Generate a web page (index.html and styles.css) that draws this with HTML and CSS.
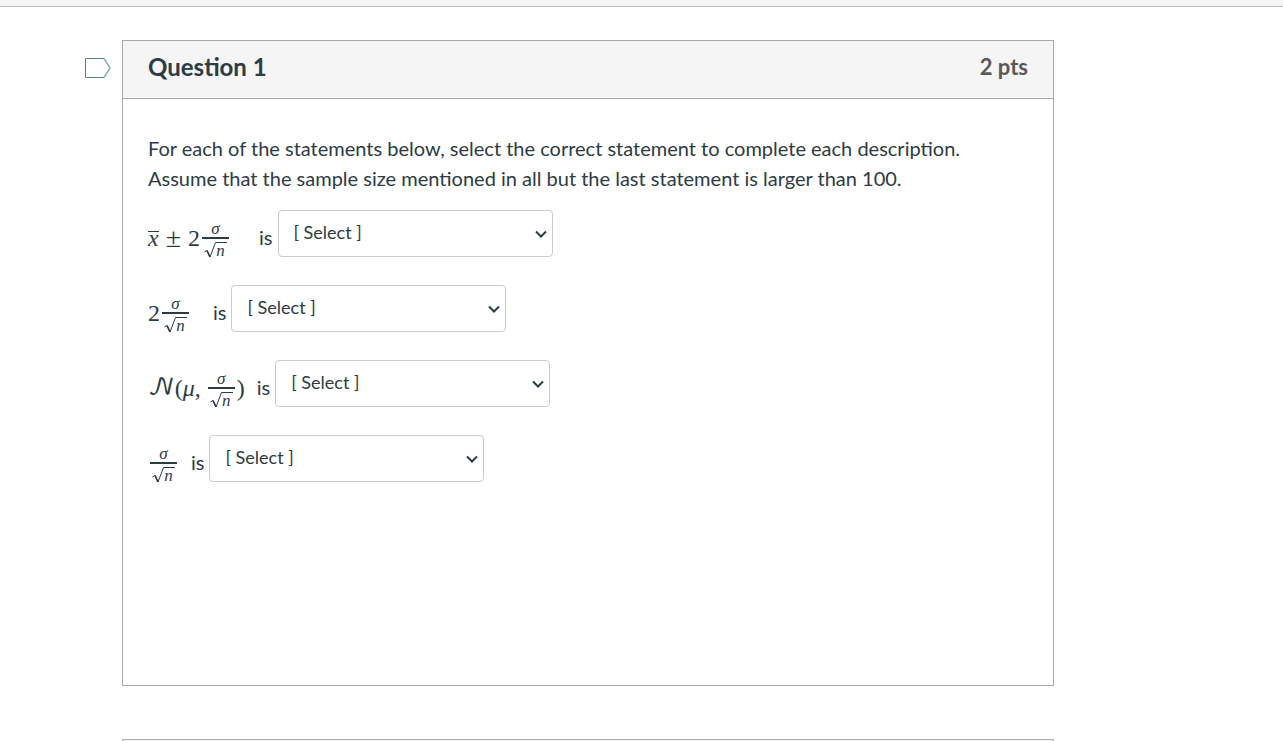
FILE: index.html
```
<!doctype html>
<html lang="en">
<head>
    <meta charset="UTF-8">
    <meta name="viewport" content="width=device-width, initial-scale=1.0">
    <title>Quiz</title>
    <link rel="stylesheet" href="styles.css">
</head>
<body>
    <div class="topbar"></div>
    <main class="questions">
        <section class="question">
            <button class="flag" type="button" aria-label="Flag question">
                <svg width="26" height="20" viewBox="0 0 26 20">
                    <path d="M19 .5L25 10L19 19.5" fill="none" stroke="#8eabbf" stroke-width="1.5"/>
                    <path d="M19 .5H.5V19.5H19" fill="none" stroke="#4f7f9d"/>
                </svg>
            </button>
            <div class="card">
                <header class="card-header">
                    <h2 class="name">Question 1</h2>
                    <span class="points">2 pts</span>
                </header>
                <div class="card-body">
                    <p class="text">For each of the statements below, select the correct statement to complete each description. Assume that the sample size mentioned in all but the last statement is larger than 100.</p>

                    <div class="answer">
                        <label for="answer1">
                            <span class="math wide">
                                <i class="bar">x</i><span class="op">±</span><span>2</span>
                                <span class="frac">
                                    <i class="num">σ</i>
                                    <span class="root"><svg width="12" height="16" viewBox="0 0 12 16"><path d="M.5 10L3 8.5L6 15L11.5 .5H12" fill="none" stroke="#2d3b45"/><path d="M3 8.5L6 15" stroke="#2d3b45" stroke-width="1.6"/></svg><i>n</i></span>
                                </span>
                            </span>
                            is
                        </label>
                        <select id="answer1"><option>[ Select ]</option></select>
                    </div>

                    <div class="answer">
                        <label for="answer2">
                            <span class="math spaced">
                                <span>2</span>
                                <span class="frac">
                                    <i class="num">σ</i>
                                    <span class="root"><svg width="12" height="16" viewBox="0 0 12 16"><path d="M.5 10L3 8.5L6 15L11.5 .5H12" fill="none" stroke="#2d3b45"/><path d="M3 8.5L6 15" stroke="#2d3b45" stroke-width="1.6"/></svg><i>n</i></span>
                                </span>
                            </span>
                            is
                        </label>
                        <select id="answer2"><option>[ Select ]</option></select>
                    </div>

                    <div class="answer">
                        <label for="answer3">
                            <span class="math">
                                <span class="script">𝒩</span><span class="paren">(</span><i>μ</i><span class="comma">,</span>
                                <span class="frac">
                                    <i class="num">σ</i>
                                    <span class="root"><svg width="12" height="16" viewBox="0 0 12 16"><path d="M.5 10L3 8.5L6 15L11.5 .5H12" fill="none" stroke="#2d3b45"/><path d="M3 8.5L6 15" stroke="#2d3b45" stroke-width="1.6"/></svg><i>n</i></span>
                                </span>
                                <span class="paren">)</span>
                            </span>
                            is
                        </label>
                        <select id="answer3"><option>[ Select ]</option></select>
                    </div>

                    <div class="answer">
                        <label for="answer4">
                            <span class="math">
                                <span class="frac">
                                    <i class="num">σ</i>
                                    <span class="root"><svg width="12" height="16" viewBox="0 0 12 16"><path d="M.5 10L3 8.5L6 15L11.5 .5H12" fill="none" stroke="#2d3b45"/><path d="M3 8.5L6 15" stroke="#2d3b45" stroke-width="1.6"/></svg><i>n</i></span>
                                </span>
                            </span>
                            is
                        </label>
                        <select id="answer4"><option>[ Select ]</option></select>
                    </div>
                </div>
            </div>
        </section>

        <section class="question">
            <div class="card">
                <header class="card-header"></header>
            </div>
        </section>
    </main>
</body>
</html>
```
FILE: styles.css
```
body {
    margin: 0;
    height: 100vh;
    overflow: hidden;
    background: #fff;
    color: #2d3b45;
    font-family: Lato, sans-serif;
    font-size: 20px;
    line-height: 30px;
}

.topbar {
    height: 6px;
    background: #f5f5f5;
    border-bottom: 1px solid #bbb;
}

.questions {
    padding: 33px 229px 0 122px;
}

.question {
    position: relative;
    margin-bottom: 53px;
}

/* hangs in the margin left of the card */
.flag {
    position: absolute;
    top: 18px;
    left: -37px;
    padding: 0;
    border: 0;
    background: none;
    line-height: 0;
    cursor: pointer;
}

.card {
    border: 1px solid #aaa;
}

.card-header {
    display: flex;
    justify-content: space-between;
    align-items: center;
    min-height: 58px;
    padding: 0 25px 5px;
    background: #f5f5f5;
    border-bottom: 1px solid #aaa;
    box-sizing: border-box;
}

.name {
    margin: 0;
    font-size: 24px;
    font-weight: bold;
}

.points {
    color: #595959;
    font-size: 22px;
    font-weight: bold;
}

.card-body {
    padding: 34px 25px 203px;
}

.text {
    margin: 0 0 17px;
}

.answer {
    display: flex;
    align-items: center;
    gap: 5px;
    height: 47px;
    margin-bottom: 28px;
}

.answer:last-child {
    margin-bottom: 0;
}

.answer label {
    display: flex;
    align-items: center;
    padding-top: 6px;
}

.answer select {
    appearance: none;
    width: 275px;
    height: 47px;
    padding: 0 15px 3px;
    border: 1px solid #c7cdd1;
    border-radius: 4px;
    background: #fff url("data:image/svg+xml,%3Csvg xmlns='http://www.w3.org/2000/svg' width='12' height='8'%3E%3Cpath d='M1 1.5L6 6.5L11 1.5' fill='none' stroke='%232d3b45' stroke-width='2'/%3E%3C/svg%3E") no-repeat right 5px center;
    color: #2d3b45;
    font-family: Lato, sans-serif;
    font-size: 18px;
}

/* formulas */
.math {
    display: flex;
    align-items: center;
    margin-top: 2px;
    margin-right: 12px;
    font-family: "Liberation Serif", serif;
    font-size: 24px;
    line-height: 24px;
}

.math.spaced {
    margin-right: 22px;
}

.math.wide {
    margin-right: 28px;
}

.bar {
    border-top: 1px solid #2d3b45;
    line-height: 12px;
}

.op {
    margin: 0 7px;
    font-size: 28px;
}

.script {
    font-family: "DejaVu Math TeX Gyre", "DejaVu Serif", serif;
}

.comma {
    margin-right: 5px;
}

.frac {
    margin: 4px 2px 0;
    width: 27px;
    font-size: 17px;
}

.num {
    display: block;
    height: 16px;
    line-height: 16px;
    text-align: center;
    border-bottom: 2px solid #2d3b45;
}

.root {
    display: flex;
    justify-content: center;
    padding-top: 3px;
}

.root i {
    height: 16px;
    line-height: 16px;
    padding-right: 2px;
    border-top: 1px solid #2d3b45;
    box-sizing: border-box;
}
```
